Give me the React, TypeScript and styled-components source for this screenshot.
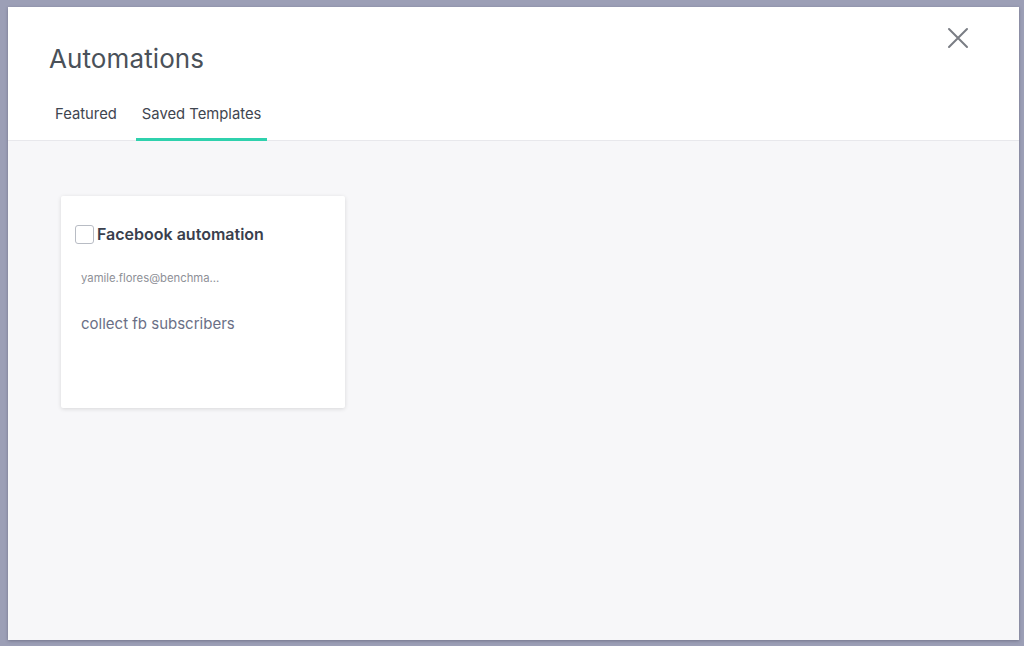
import React from 'react';
import styled, { createGlobalStyle } from 'styled-components';

const GlobalStyle = createGlobalStyle`
  html, body {
    margin: 0;
    padding: 0;
    background: #9c9fb6;
    font-family: Inter, "Noto Sans", sans-serif;
  }
  * { box-sizing: border-box; }
`;

const Backdrop = styled.div`
  width: 1024px;
  height: 646px;
  padding: 7px 5px 6px 8px;
  background: #9c9fb6;
`;

const Modal = styled.div`
  width: 100%;
  height: 100%;
  display: flex;
  flex-direction: column;
  background: #f7f7f9;
  box-shadow: 0 1px 3px rgba(40, 40, 60, 0.35);
`;

const Header = styled.div`
  position: relative;
  background: #fff;
  border-bottom: 1px solid #e8e8ec;
  padding: 36px 0 0 41px;
`;

const Title = styled.h1`
  margin: 0;
  font-size: 26px;
  font-weight: 400;
  color: #4a5159;
  letter-spacing: 0.1px;
`;

const CloseButton = styled.button`
  position: absolute;
  top: 19px;
  right: 49px;
  width: 24px;
  height: 24px;
  padding: 0;
  border: none;
  background: none;
  cursor: pointer;
`;

const Tabs = styled.div`
  display: flex;
  gap: 13px;
  margin-top: 21px;
`;

const Tab = styled.div<{ $active?: boolean }>`
  padding: 10px 6px 15px;
  font-size: 14.8px;
  color: #3f4650;
  border-bottom: 3px solid ${p => (p.$active ? '#2fd1ad' : 'transparent')};
  margin-bottom: -1px;
  cursor: pointer;
`;

const Body = styled.div`
  flex: 1;
  padding: 55px 0 0 53px;
`;

const Card = styled.div`
  width: 284px;
  height: 212px;
  background: #fff;
  border-radius: 2px;
  box-shadow: 0 1px 4px rgba(0, 0, 0, 0.13);
  padding: 28px 14px 0;
`;

const CardHead = styled.label`
  display: flex;
  align-items: center;
  gap: 3px;
`;

const Check = styled.span`
  width: 19px;
  height: 19px;
  border: 1.5px solid #b8bcc4;
  border-radius: 3px;
  background: #fff;
`;

const CardTitle = styled.span`
  font-size: 16px;
  font-weight: 600;
  color: #3a3f4d;
`;

const Email = styled.div`
  margin: 27px 0 0 6px;
  font-size: 11.3px;
  color: #8e9097;
`;

const Desc = styled.div`
  margin: 29px 0 0 6px;
  font-size: 15px;
  color: #6a6f86;
`;

export default function App() {
  return (
    <>
      <GlobalStyle />
      <Backdrop>
        <Modal>
          <Header>
            <Title>Automations</Title>
            <CloseButton aria-label="Close">
              <svg width="24" height="24" viewBox="0 0 24 24">
                <path d="M3 3 L21 21 M21 3 L3 21" stroke="#7a7d84" strokeWidth="2" strokeLinecap="round" />
              </svg>
            </CloseButton>
            <Tabs>
              <Tab>Featured</Tab>
              <Tab $active>Saved Templates</Tab>
            </Tabs>
          </Header>
          <Body>
            <Card>
              <CardHead>
                <Check />
                <CardTitle>Facebook automation</CardTitle>
              </CardHead>
              <Email>yamile.flores@benchma...</Email>
              <Desc>collect fb subscribers</Desc>
            </Card>
          </Body>
        </Modal>
      </Backdrop>
    </>
  );
}
